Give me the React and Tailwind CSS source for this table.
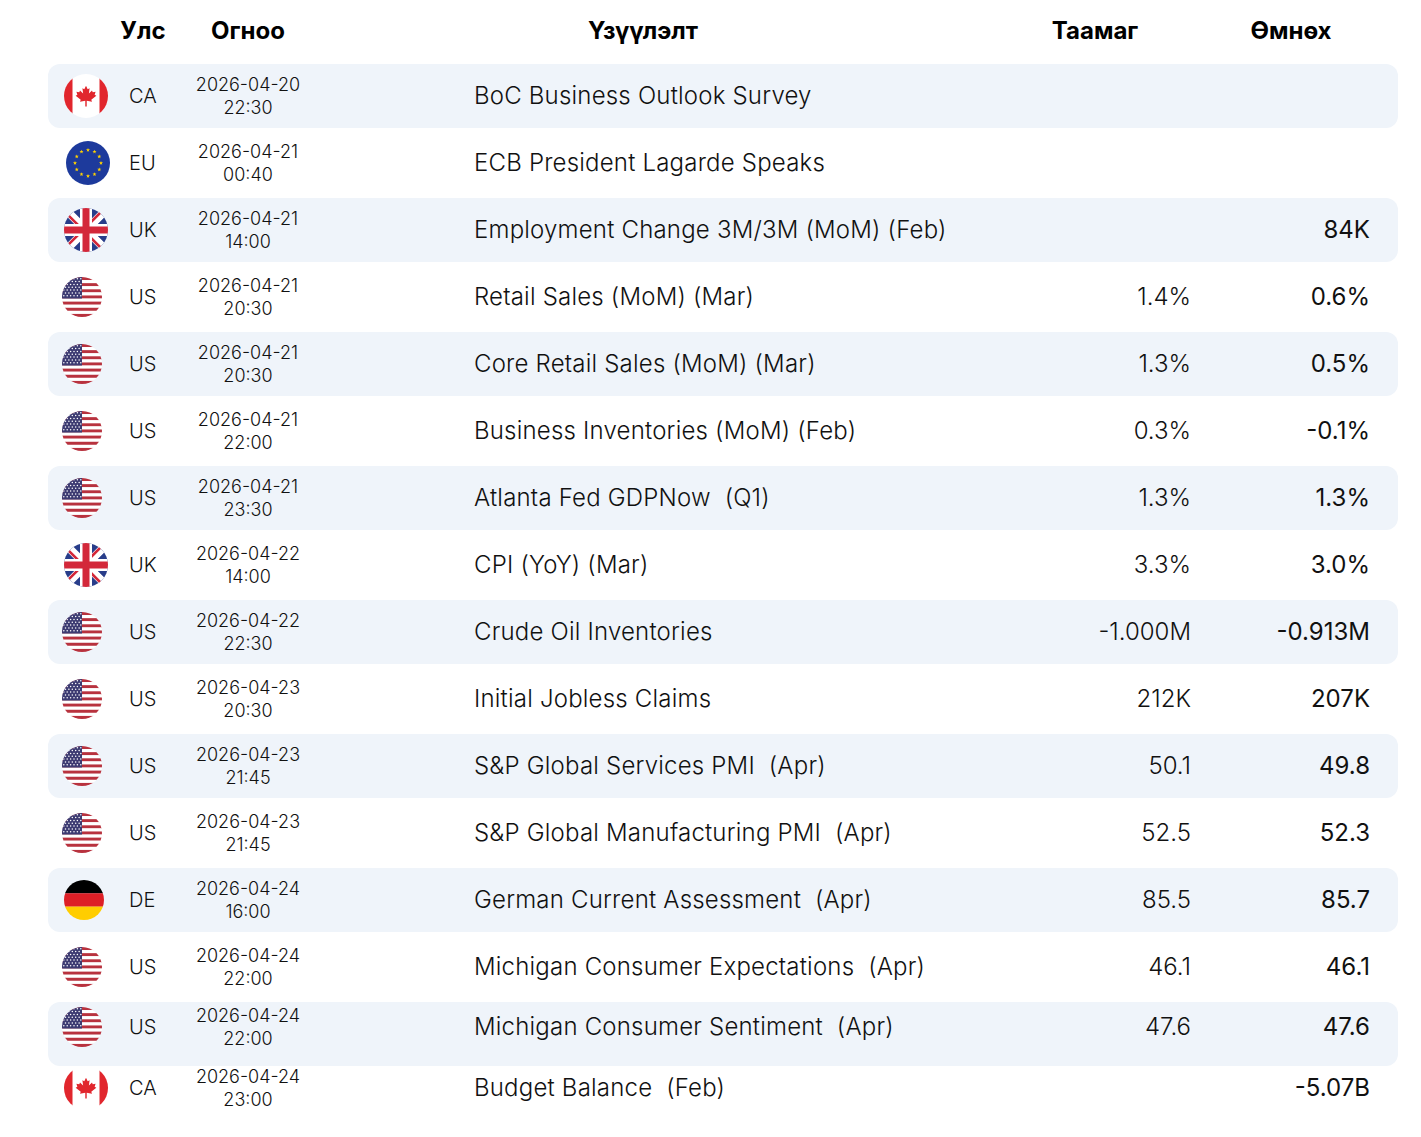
import React from "react";

const FONT = { fontFamily: "Inter, 'Noto Sans', sans-serif" };

function starPoints(cx, cy, r) {
  const pts = [];
  for (let i = 0; i < 10; i++) {
    const rad = i % 2 === 0 ? r : r * 0.42;
    const a = -Math.PI / 2 + (i * Math.PI) / 5;
    pts.push(`${(cx + rad * Math.cos(a)).toFixed(2)},${(cy + rad * Math.sin(a)).toFixed(2)}`);
  }
  return pts.join(" ");
}

function FlagCA() {
  return (
    <svg width="44" height="44" viewBox="0 0 44 44" className="ml-[4px] block">
      <defs>
        <clipPath id="cca">
          <circle cx="22" cy="22" r="22" />
        </clipPath>
      </defs>
      <g clipPath="url(#cca)">
        <rect x="0" y="0" width="44" height="44" fill="#ffffff" />
        <rect x="0" y="0" width="8.5" height="44" fill="#e1262d" />
        <rect x="35.5" y="0" width="8.5" height="44" fill="#e1262d" />
        <path
          transform="translate(10,10.5) scale(0.24)"
          fill="#e1262d"
          d="M50,5 L57,20 L65,16 L62,38 L75,25 L78,32 L90,30 L86,43 L93,47 L72,64 L75,72 L53,68 L53,92 L47,92 L47,68 L25,72 L28,64 L7,47 L14,43 L10,30 L22,32 L25,25 L38,38 L35,16 L43,20 Z"
        />
      </g>
    </svg>
  );
}

function FlagEU() {
  const stars = [];
  for (let i = 0; i < 12; i++) {
    const a = (i * Math.PI) / 6;
    stars.push(
      <polygon
        key={i}
        points={starPoints(22 + 13 * Math.cos(a), 22 + 13 * Math.sin(a), 2.1)}
        fill="#ffd200"
      />
    );
  }
  return (
    <svg width="44" height="44" viewBox="0 0 44 44" className="ml-[6px] block">
      <circle cx="22" cy="22" r="22" fill="#1d3a9c" />
      {stars}
    </svg>
  );
}

function FlagUK() {
  return (
    <svg width="44" height="44" viewBox="0 0 44 44" className="ml-[4px] block">
      <defs>
        <clipPath id="cuk">
          <circle cx="22" cy="22" r="22" />
        </clipPath>
      </defs>
      <g clipPath="url(#cuk)">
        <rect x="0" y="0" width="44" height="44" fill="#283d8a" />
        <path d="M0,0 L44,44 M44,0 L0,44" stroke="#ffffff" strokeWidth="8" />
        <path d="M0,0 L22,22 M44,44 L22,22" stroke="#d3283a" strokeWidth="2.6" transform="translate(-1.5,1.5)" />
        <path d="M44,0 L22,22 M0,44 L22,22" stroke="#d3283a" strokeWidth="2.6" transform="translate(-1.5,-1.5)" />
        <rect x="16" y="0" width="12" height="44" fill="#ffffff" />
        <rect x="0" y="16" width="44" height="12" fill="#ffffff" />
        <rect x="18.5" y="0" width="7" height="44" fill="#d3283a" />
        <rect x="0" y="18.5" width="44" height="7" fill="#d3283a" />
      </g>
    </svg>
  );
}

function FlagUS() {
  const stripes = [];
  const h = 40 / 13;
  for (let i = 0; i < 13; i++) {
    stripes.push(
      <rect key={i} x="0" y={i * h} width="40" height={h + 0.05} fill={i % 2 === 0 ? "#b8323e" : "#ffffff"} />
    );
  }
  const dots = [];
  for (let r = 0; r < 7; r++) {
    const cols = r % 2 === 0 ? 6 : 5;
    for (let c = 0; c < cols; c++) {
      const x = (r % 2 === 0 ? 1.8 : 3.5) + c * 3.4;
      const y = 1.7 + r * 2.85;
      dots.push(<circle key={`${r}-${c}`} cx={x} cy={y} r="0.75" fill="#ffffff" />);
    }
  }
  return (
    <svg width="40" height="40" viewBox="0 0 40 40" className="ml-[2px] block">
      <defs>
        <clipPath id="cus">
          <circle cx="20" cy="20" r="20" />
        </clipPath>
      </defs>
      <g clipPath="url(#cus)">
        {stripes}
        <rect x="0" y="0" width="20" height={h * 7} fill="#3d3b72" />
        {dots}
      </g>
    </svg>
  );
}

function FlagDE() {
  return (
    <svg width="40" height="40" viewBox="0 0 40 40" className="ml-[4px] block">
      <defs>
        <clipPath id="cde">
          <circle cx="20" cy="20" r="20" />
        </clipPath>
      </defs>
      <g clipPath="url(#cde)">
        <rect x="0" y="0" width="40" height="13.4" fill="#000000" />
        <rect x="0" y="13.3" width="40" height="13.4" fill="#dd1f26" />
        <rect x="0" y="26.6" width="40" height="13.4" fill="#ffcd00" />
      </g>
    </svg>
  );
}

const FLAGS = { CA: FlagCA, EU: FlagEU, UK: FlagUK, US: FlagUS, DE: FlagDE };

const ROWS = [
  { c: "CA", d: "2026-04-20", t: "22:30", e: "BoC Business Outlook Survey", f: "", p: "" },
  { c: "EU", d: "2026-04-21", t: "00:40", e: "ECB President Lagarde Speaks", f: "", p: "" },
  { c: "UK", d: "2026-04-21", t: "14:00", e: "Employment Change 3M/3M (MoM) (Feb)", f: "", p: "84K" },
  { c: "US", d: "2026-04-21", t: "20:30", e: "Retail Sales (MoM) (Mar)", f: "1.4%", p: "0.6%" },
  { c: "US", d: "2026-04-21", t: "20:30", e: "Core Retail Sales (MoM) (Mar)", f: "1.3%", p: "0.5%" },
  { c: "US", d: "2026-04-21", t: "22:00", e: "Business Inventories (MoM) (Feb)", f: "0.3%", p: "-0.1%" },
  { c: "US", d: "2026-04-21", t: "23:30", e: "Atlanta Fed GDPNow  (Q1)", f: "1.3%", p: "1.3%" },
  { c: "UK", d: "2026-04-22", t: "14:00", e: "CPI (YoY) (Mar)", f: "3.3%", p: "3.0%" },
  { c: "US", d: "2026-04-22", t: "22:30", e: "Crude Oil Inventories", f: "-1.000M", p: "-0.913M" },
  { c: "US", d: "2026-04-23", t: "20:30", e: "Initial Jobless Claims", f: "212K", p: "207K" },
  { c: "US", d: "2026-04-23", t: "21:45", e: "S&P Global Services PMI  (Apr)", f: "50.1", p: "49.8" },
  { c: "US", d: "2026-04-23", t: "21:45", e: "S&P Global Manufacturing PMI  (Apr)", f: "52.5", p: "52.3" },
  { c: "DE", d: "2026-04-24", t: "16:00", e: "German Current Assessment  (Apr)", f: "85.5", p: "85.7" },
  { c: "US", d: "2026-04-24", t: "22:00", e: "Michigan Consumer Expectations  (Apr)", f: "46.1", p: "46.1" },
  { c: "US", d: "2026-04-24", t: "22:00", e: "Michigan Consumer Sentiment  (Apr)", f: "47.6", p: "47.6", pad: "pb-[14px]" },
  { c: "CA", d: "2026-04-24", t: "23:00", e: "Budget Balance  (Feb)", f: "", p: "-5.07B", pad: "pb-[26px]" },
];

export default function App() {
  return (
    <div className="min-h-screen bg-white text-[#111111]" style={FONT}>
      <div className="ml-[48px] w-[1350px] flex flex-col gap-[3px]">
        <div className="h-[61px] flex items-center pl-[40px] text-[24px] font-bold text-black">
          <div className="w-[110px] text-center">Улс</div>
          <div className="w-[100px] text-center">Огноо</div>
          <div className="w-[690px] text-center">Үзүүлэлт</div>
          <div className="w-[214px] text-center">Таамаг</div>
          <div className="w-[178px] text-center">Өмнөх</div>
        </div>
        {ROWS.map((r, i) => {
          const Flag = FLAGS[r.c];
          return (
            <div
              key={i}
              className={`h-[64px] flex items-center rounded-xl ${i % 2 === 0 ? "bg-[#eff4fa]" : "bg-white"} ${r.pad || ""}`}
            >
              <div className="w-[81px] pl-3 flex items-center">
                <Flag />
              </div>
              <div className="w-[69px] text-[20px] font-light">{r.c}</div>
              <div className="w-[100px] text-center text-[18px] leading-[23px] font-light whitespace-nowrap flex flex-col items-center">
                <div>{r.d}</div>
                <div>{r.t}</div>
              </div>
              <div className="flex-1 pl-[176px] text-[24px] tracking-[0.2px] font-light whitespace-pre">{r.e}</div>
              <div className="w-[150px] text-right text-[24px] font-light">{r.f}</div>
              <div className="w-[179px] text-right text-[24px] font-normal">{r.p}</div>
              <div className="w-[28px]" />
            </div>
          );
        })}
      </div>
    </div>
  );
}
